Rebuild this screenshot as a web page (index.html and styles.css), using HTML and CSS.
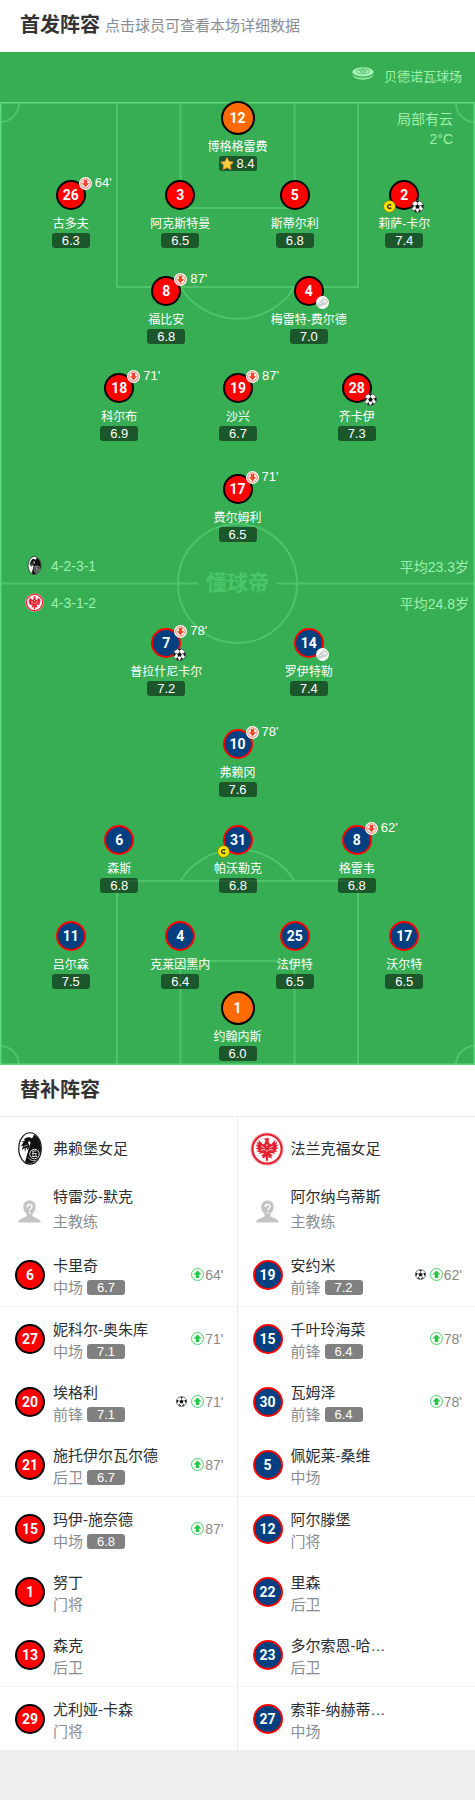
FILE: index.html
```html
<!DOCTYPE html>
<html lang="zh-CN">
<head>
  <meta charset="UTF-8">
  <meta name="viewport" content="width=device-width, initial-scale=1">
  <title>首发阵容</title>
  <link rel="stylesheet" href="styles.css">
</head>
<body>
  <svg class="defs" aria-hidden="true">
    <symbol id="i-down" viewBox="0 0 26 26">
      <circle cx="13" cy="13" r="13" fill="#fff"/>
      <circle cx="13" cy="13" r="9.500" fill="none" stroke="#f5452b" stroke-width="1.600"/>
      <path d="M9.500 6h7v6.500h4l-7.500 8-7.500-8h4z" fill="#f5452b"/>
    </symbol>
    <symbol id="i-up" viewBox="0 0 26 26">
      <circle cx="13" cy="13" r="12" fill="#fff" stroke="#24c748" stroke-width="1.600"/>
      <path d="M9.500 20h7v-7h4.500l-8-8-8 8h4.500z" fill="#24c748"/>
    </symbol>
    <symbol id="i-ball" viewBox="0 0 26 26">
      <circle cx="13" cy="13" r="12" fill="#fff" stroke="#222" stroke-width="1.200"/>
      <path d="M13 8.500l4.500 3.300-1.700 5.200h-5.600l-1.700-5.200zM8.500 2.200h9l-4.500 3.200zM1.500 9l4 1.200-.6 4.500L1.400 16.500zM24.500 9l-4 1.200.6 4.500 3.500 1.800zM5.500 21.500l3-2 2.800 2.500v2.800zM20.500 21.500l-3-2-2.800 2.500v2.800z" fill="#111"/>
      <path d="M13 5v4M5.500 10.500l3.500 1.500M20.500 10.500L17 12M10 17l-2 3M16 17l2 3" stroke="#111"/>
    </symbol>
    <symbol id="i-captain" viewBox="0 0 26 26">
      <circle cx="13" cy="13" r="12" fill="#ffe100" stroke="#5c6b1c" stroke-width="1.400"/>
      <path d="M16.500 10.300c-3.200-2.300-7.300-.8-7.300 2.700s4.100 5 7.300 2.700" fill="none" stroke="#222" stroke-width="2.600"/>
    </symbol>
    <symbol id="i-assist" viewBox="0 0 26 26">
      <circle cx="13" cy="13" r="13" fill="#fff"/>
      <path d="M3.500 17c2-3 6-4.500 9.500-10l2.500-2.500 2 2.500 3-1 3 5.500c-.5 3-3.500 4.500-7 5-4 .7-6 4-10 4-2.500 0-3.500-1.500-3-3.500z" fill="#eee" stroke="#999" stroke-width="1.200"/>
      <path d="M10 11l3 3M12 8.500l3 3M5 18c5 0 8-4 13-5M7 21l1 2M12 19l1 2M18 17l1 2" fill="none" stroke="#999"/>
    </symbol>
    <symbol id="i-star" viewBox="0 0 28 26">
      <path d="M14 1.500l3.900 7.700 8.600 1.300-6.200 6 1.500 8.500-7.800-4-7.800 4 1.500-8.500-6.200-6 8.600-1.300z" fill="#ffc83a" stroke="#f49b21" stroke-width="1.800" stroke-linejoin="round"/>
      <path d="M14 4l2 6 5 1-7 2z" fill="#ffe27a"/>
    </symbol>
    <symbol id="i-coach" viewBox="0 0 46 46">
      <path d="M23 1c7.500 0 12.500 5 12.500 12.500 0 6-2.500 10-6.500 14v5c5 4 14 4 16.500 11v1.500h-45V43.500C3 37 12 36.500 17 32.500v-5c-4-4-6.500-8-6.500-14C10.500 6 15.500 1 23 1z" fill="#c4c4c4"/>
      <path d="M18.500 14c0-6.500 9.500-6.500 9.500-.8 0 3.800-4.500 3.800-4.500 7.800M23.500 24v3" fill="none" stroke="#fff" stroke-width="2.800"/>
    </symbol>
    <symbol id="i-stadium" viewBox="0 0 44 26">
      <ellipse cx="22" cy="10" rx="21.500" ry="9.500" fill="#a5f3b4"/>
      <ellipse cx="22" cy="8.500" rx="13" ry="5" fill="none" stroke="#37ae54" stroke-width="1.200"/>
      <ellipse cx="22" cy="8" rx="6.500" ry="2.200" fill="none" stroke="#37ae54" stroke-width="1.500"/>
      <path d="M12 4.500l3 2M32 4.500l-3 2M22 1v3" stroke="#37ae54"/>
      <path d="M1 14c4 9 38 9 42 0 0 15-42 15-42 0z" fill="#a5f3b4"/>
      <path d="M1 13c7 9 35 9 42 0M3 17c8 7 30 7 38 0" fill="none" stroke="#37ae54" stroke-width="1.200"/>
    </symbol>
    <symbol id="i-freiburg" viewBox="0 0 48 66">
      <ellipse cx="24" cy="33" rx="22.500" ry="31.500" fill="#fff" stroke="#111" stroke-width="2.400"/>
      <path d="M32 5c20 12 20 52-8 58.500-3 0-8-2-10-4C20 42 23 22 32 5z" fill="#111"/>
      <path d="M12 15c4-5 13-6 17-1l-2 8-5-4-2 3 3 6-3 9-3-4-3 8-1-8-5 4 2-9-5 2 6-8-4-2 7-1z" fill="#111"/>
      <path d="M11 29l8-3M13 35l6-4" stroke="#fff" stroke-width="1.200"/>
      <circle cx="33" cy="44" r="9.500" fill="#111" stroke="#ddd" stroke-width="2"/>
      <path d="M28 38h9M28 43h9M28 49h10M30 38v11M36 43v6M21 51c3 6 10 7 14 6" fill="none" stroke="#ddd" stroke-width="1.800"/>
    </symbol>
    <symbol id="i-frankfurt" viewBox="0 0 68 68">
      <circle cx="34" cy="34" r="33" fill="#f7a3aa"/>
      <circle cx="34" cy="34" r="29" fill="#fff" stroke="#e8202f" stroke-width="4"/>
      <path d="M34 12l5 1-2 3 1 6 4 3 9-10-1 7 5-3-3 7 5-1-5 6 5 1-6 4 4 3-7 1 3 4-8-2-3 1 6 5-4 1 2 4-6-2-1-4-1 9-2 4-2-4-1-9-1 4-6 2 2-4-4-1 6-5-3-1-8 2 3-4-7-1 4-3-6-4 5-1-5-6 5 1-3-7 5 3-1-7 9 10 4-3 1-6-4-2z" fill="#e8202f"/>
      <path d="M22 28l7 4M46 28l-7 4M22 36l8-1M46 36l-8-1M34 24v5M31 36l3 3 3-3" stroke="#fff" stroke-width="1.600" fill="none"/>
    </symbol>
  </svg>

  <header class="header">
    <h2>首发阵容</h2>
    <p>点击球员可查看本场详细数据</p>
  </header>

  <section class="pitch">
    <svg class="field" viewBox="0 0 475 963" preserveAspectRatio="none" fill="none" stroke="#4ec36c" stroke-width="2" aria-hidden="true">
      <path d="M117 1v184h241V1M180.500 1v105h114V1M180.500 185a67 67 0 0 0 114 0"/>
      <path d="M117 962V779h241v183M180.500 962V859h114v103M180.500 779a67 67 0 0 1 114 0"/>
      <path d="M1 481.500h197M277 481.500h197M19 1a19 19 0 0 1-19 19M456 1a19 19 0 0 0 19 19M0 944a19 19 0 0 1 19 19M475 944a19 19 0 0 0-19 19"/>
      <circle cx="237.500" cy="481.500" r="59.500"/>
      <path d="M.5.500h474v962H.500z" stroke="#5ed87c"/>
    </svg>

    <div class="venue">
      <svg><use href="#i-stadium"/></svg>
      <span>贝德诺瓦球场</span>
    </div>
    <div class="weather">局部有云<br>2°C</div>

    <div class="half home" id="home"></div>

    <div class="middle">
      <div class="formation">
        <svg><use href="#i-freiburg"/></svg>
        <span>4-2-3-1</span>
        <span class="age">平均23.3岁</span>
      </div>
      <div class="formation">
        <svg><use href="#i-frankfurt"/></svg>
        <span>4-3-1-2</span>
        <span class="age">平均24.8岁</span>
      </div>
      <div class="watermark">懂球帝</div>
    </div>

    <div class="half away" id="away"></div>
  </section>

  <section class="bench">
    <h2>替补阵容</h2>
    <div class="columns">
      <div class="column home" id="homeBench">
        <div class="row team">
          <svg><use href="#i-freiburg"/></svg>
          <span class="name">弗赖堡女足</span>
        </div>
        <div class="row coach">
          <svg><use href="#i-coach"/></svg>
          <div class="info"><div class="name">特雷莎-默克</div><div class="role">主教练</div></div>
        </div>
      </div>
      <div class="column away" id="awayBench">
        <div class="row team">
          <svg><use href="#i-frankfurt"/></svg>
          <span class="name">法兰克福女足</span>
        </div>
        <div class="row coach">
          <svg><use href="#i-coach"/></svg>
          <div class="info"><div class="name">阿尔纳乌蒂斯</div><div class="role">主教练</div></div>
        </div>
      </div>
    </div>
  </section>

  <script>
    // each line: [number, name, rating, { off, goal, captain, assist, star }]
    const home = [
      [[12, '博格格雷费', '8.4', { star: true }]],
      [[26, '古多夫', '6.3', { off: 64 }], [3, '阿克斯特曼', '6.5'], [5, '斯蒂尔利', '6.8'], [2, '莉萨-卡尔', '7.4', { captain: true, goal: true }]],
      [[8, '福比安', '6.8', { off: 87 }], [4, '梅雷特-费尔德', '7.0', { assist: true }]],
      [[18, '科尔布', '6.9', { off: 71 }], [19, '沙兴', '6.7', { off: 87 }], [28, '齐卡伊', '7.3', { goal: true }]],
      [[17, '费尔姆利', '6.5', { off: 71 }]]
    ]
    const away = [
      [[7, '普拉什尼卡尔', '7.2', { off: 78, goal: true }], [14, '罗伊特勒', '7.4', { assist: true }]],
      [[10, '弗赖冈', '7.6', { off: 78 }]],
      [[6, '森斯', '6.8'], [31, '帕沃勒克', '6.8', { captain: true }], [8, '格雷韦', '6.8', { off: 62 }]],
      [[11, '吕尔森', '7.5'], [4, '克莱因黑内', '6.4'], [25, '法伊特', '6.5'], [17, '沃尔特', '6.5']],
      [[1, '约翰内斯', '6.0']]
    ]
    // [number, name, position, rating, minute on, goal]
    const homeBench = [
      [6, '卡里奇', '中场', '6.7', 64], [27, '妮科尔-奥朱库', '中场', '7.1', 71],
      [20, '埃格利', '前锋', '7.1', 71, true], [21, '施托伊尔瓦尔德', '后卫', '6.7', 87],
      [15, '玛伊-施奈德', '中场', '6.8', 87], [1, '努丁', '门将'], [13, '森克', '后卫'], [29, '尤利娅-卡森', '门将']
    ]
    const awayBench = [
      [19, '安约米', '前锋', '7.2', 62, true], [15, '千叶玲海菜', '前锋', '6.4', 78],
      [30, '瓦姆泽', '前锋', '6.4', 78], [5, '佩妮莱-桑维', '中场'], [12, '阿尔滕堡', '门将'],
      [22, '里森', '后卫'], [23, '多尔索恩-哈…', '后卫'], [27, '索菲-纳赫蒂…', '中场']
    ]

    const icon = (name, cls) => `<svg class="${cls}"><use href="#i-${name}"/></svg>`

    function player([number, name, rating, ev = {}]) {
      return `
        <div class="player">
          <div class="shirt">${number}
            ${ev.off ? icon('down', 'badge top') + `<span class="minute">${ev.off}'</span>` : ''}
            ${ev.captain ? icon('captain', 'badge left') : ''}
            ${ev.goal ? icon('ball', 'badge right') : ''}
            ${ev.assist ? icon('assist', 'badge right') : ''}
          </div>
          <div class="label">${name}</div>
          <div class="rating">${ev.star ? icon('star', 'star') : ''}${rating}</div>
        </div>`
    }

    function drawHalf(id, lines, keeperIndex) {
      document.getElementById(id).innerHTML = lines.map((line, i) =>
        `<div class="line of-${line.length}${i === keeperIndex ? ' keeper' : ''}">${line.map(player).join('')}</div>`
      ).join('')
    }

    function drawBench(id, list) {
      document.getElementById(id).insertAdjacentHTML('beforeend', list.map(([number, name, position, rating, on, goal]) => `
        <div class="row sub">
          <div class="shirt">${number}</div>
          <div class="info">
            <div class="name">${name}</div>
            <div class="role">${position}${rating ? `<span class="rating">${rating}</span>` : ''}</div>
          </div>
          ${on ? `<div class="on">${goal ? icon('ball', 'goal') : ''}${icon('up', 'up')}${on}'</div>` : ''}
        </div>`).join(''))
    }

    drawHalf('home', home, 0)
    drawHalf('away', away, 4)
    drawBench('homeBench', homeBench)
    drawBench('awayBench', awayBench)
  </script>
</body>
</html>
```
FILE: styles.css
```css
* {
  box-sizing: border-box;
}

body {
  margin: 0;
  background: #eeeff1;
  color: #333;
  font-family: "Liberation Sans", "Noto Sans CJK SC", sans-serif;
}

.defs {
  position: absolute;
  width: 0;
  height: 0;
}

h2 {
  margin: 0;
  font-size: 20px;
  line-height: 30px;
}

.header {
  display: flex;
  align-items: center;
  gap: 5px;
  height: 52px;
  padding: 0 20px 2px;
  background: #fff;
  border-bottom: 1px solid #eee;
}

.header p {
  margin: 0;
  font-size: 15px;
  color: #888d94;
}

/* pitch */
.pitch {
  position: relative;
  background: #37ae54;
  padding-bottom: 4px;
}

.field {
  position: absolute;
  top: 50px;
  left: 0;
  width: 100%;
  height: calc(100% - 50px);
}

.venue {
  display: flex;
  justify-content: flex-end;
  align-items: center;
  gap: 10px;
  height: 49px;
  padding: 0 13px 2px 0;
  font-size: 13px;
  color: #9df0ad;
}

.venue svg {
  width: 22px;
  height: 13px;
  margin-bottom: 4px;
}

.weather {
  position: absolute;
  top: 57px;
  right: 22px;
  font-size: 14px;
  line-height: 20px;
  text-align: right;
  color: #9df0ad;
}

.half {
  position: relative;
}

.line {
  display: flex;
  justify-content: center;
  margin-bottom: 28px;
}

.line.of-2 {
  padding: 0 20%;
}

.line.of-3 {
  padding: 0 59px 0 60px;
}

.line.of-4 {
  display: grid;
  grid-template-columns: 11fr 11fr 12fr 10fr;
  padding: 0 21px 0 16px;
}

.home .of-2 {
  margin-bottom: 29px;
}

.home .of-3,
.away .of-2 {
  margin-bottom: 33px;
}

.home .keeper {
  margin-bottom: 9px;
}

.away .of-4 {
  margin-bottom: 2px;
}

.line:last-child {
  margin-bottom: 0;
}

.player {
  flex: 1;
  display: flex;
  flex-direction: column;
  align-items: center;
}

.shirt {
  position: relative;
  width: 30px;
  height: 30px;
  border: 2px solid #000;
  border-radius: 50%;
  background: #f00;
  color: #fff;
  font: bold 14px/26px Roboto, sans-serif;
  text-align: center;
}

.away .shirt {
  background: #004080;
  border-color: #f00;
}

.keeper .shirt {
  width: 34px;
  height: 34px;
  line-height: 30px;
  background: #ff6a00;
  border-color: #000;
}

.badge {
  position: absolute;
  width: 13px;
  height: 13px;
}

.badge.top {
  top: -5px;
  left: 21px;
}

.badge.left {
  top: 18px;
  left: -8px;
}

.badge.right {
  top: 18px;
  left: 20px;
}

.minute {
  position: absolute;
  top: -7px;
  left: 37px;
  font: 13px/16px "Liberation Sans", sans-serif;
}

.label {
  font-size: 12px;
  line-height: 17px;
  margin-top: 6px;
  white-space: nowrap;
  color: #fff;
}

.keeper .label {
  margin-top: 4px;
}

.rating {
  display: flex;
  justify-content: center;
  align-items: center;
  width: 38px;
  height: 15px;
  border-radius: 3px;
  background: rgba(0, 0, 0, .5);
  color: #fff;
  font-size: 13px;
}

.star {
  width: 14px;
  height: 13px;
  margin-right: 2px;
}

.middle {
  position: relative;
  padding: 5px 6px 7px 25px;
}

.formation {
  display: flex;
  align-items: center;
  gap: 7px;
  height: 37px;
  font-size: 14px;
  color: #9df0ad;
}

.formation svg {
  width: 19px;
  height: 19px;
}

.age {
  margin-left: auto;
}

.watermark {
  position: absolute;
  top: 26px;
  left: 0;
  width: 100%;
  font-size: 21px;
  line-height: 30px;
  font-weight: bold;
  text-align: center;
  color: #4ac66a;
}

/* bench */
.bench {
  background: #fff;
}

.bench h2 {
  padding: 10px 20px 11px;
  border-bottom: 1px solid #eee;
}

.columns {
  display: grid;
  grid-template-columns: 1fr 1fr;
}

.column.home {
  border-right: 1px solid #eaeaea;
}

.row {
  display: flex;
  align-items: center;
  gap: 8px;
  height: 63px;
  padding: 0 13px 0 15px;
}

.row svg {
  flex: none;
}

.team svg {
  width: 30px;
  height: 33px;
}

.away .team svg {
  width: 34px;
  height: 34px;
  margin: 0 -1px 0 -3px;
}

.coach svg {
  width: 23px;
  height: 23px;
  margin: 0 4px 0 3px;
}

.info {
  flex: 1;
  padding-top: 4px;
}

.coach .info {
  padding: 0 0 6px;
}

.coach .role {
  margin-top: 3px;
}

.sub:nth-child(3n) {
  height: 64px;
  border-bottom: 1px solid #f4f4f5;
}

.sub .shirt {
  flex: none;
}

.name {
  font-size: 15px;
  line-height: 22px;
  color: #2c2e31;
}

.role {
  display: flex;
  align-items: center;
  gap: 4px;
  font-size: 15px;
  line-height: 21px;
  color: #888d94;
}

.role .rating {
  background: gray;
}

.on {
  display: flex;
  align-items: center;
  font-size: 14px;
  color: #888;
}

.up {
  width: 13px;
  height: 13px;
  margin-right: 1px;
}

.goal {
  width: 11px;
  height: 11px;
  margin-right: 4px;
}
```
